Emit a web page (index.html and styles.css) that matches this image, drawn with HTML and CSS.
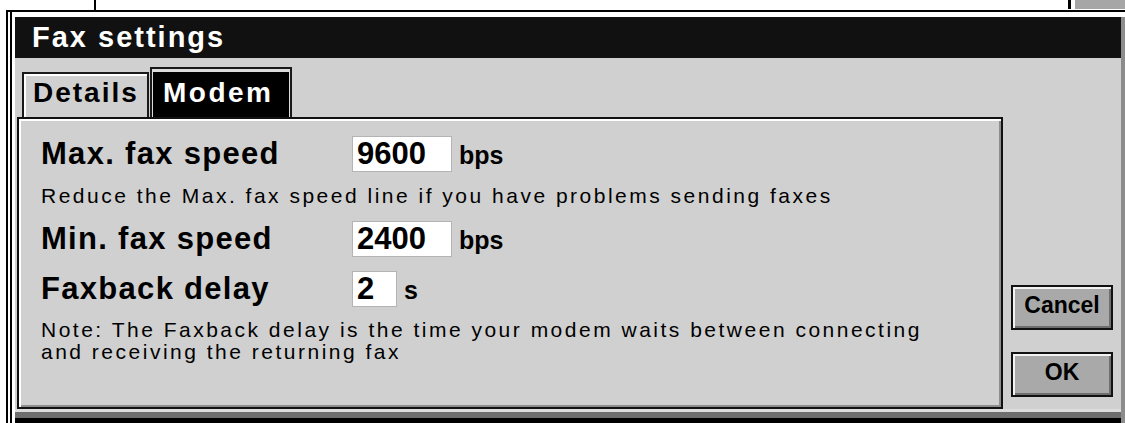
FILE: index.html
```html
<!DOCTYPE html>
<html lang="en">
<head>
<meta charset="utf-8">
<title>Fax settings</title>
<link rel="stylesheet" href="styles.css">
</head>
<body>
<div class="desktop">
  <div class="back back-left"></div>
  <div class="back back-right"><div class="back-fill"></div></div>

  <div class="window">
    <div class="frame">
      <div class="win">
        <div class="titlebar">Fax settings</div>
        <div class="body">
          <div class="main">
            <div class="tabs">
              <div class="tab">Details</div>
              <div class="tab tab-active"><span class="tab-face">Modem</span></div>
            </div>
            <div class="panel">
              <div class="field">
                <span class="label">Max. fax speed</span>
                <span class="input">9600</span>
                <span class="unit">bps</span>
              </div>
              <p class="hint">Reduce the Max. fax speed line if you have problems sending faxes</p>
              <div class="field">
                <span class="label">Min. fax speed</span>
                <span class="input">2400</span>
                <span class="unit">bps</span>
              </div>
              <div class="field field-gap">
                <span class="label">Faxback delay</span>
                <span class="input input-short">2</span>
                <span class="unit">s</span>
              </div>
              <p class="hint note">Note: The Faxback delay is the time your modem waits between connecting and receiving the returning fax</p>
            </div>
          </div>
          <div class="actions">
            <button class="btn" type="button">Cancel</button>
            <button class="btn" type="button">OK</button>
          </div>
        </div>
        <div class="win-foot"></div>
      </div>
    </div>
  </div>
</div>
</body>
</html>
```

FILE: styles.css
```css
* {
  box-sizing: border-box;
}

html,
body {
  margin: 0;
  background: #fff;
}

.desktop {
  position: relative;
  width: 1125px;
  height: 423px;
  padding-top: 10px;
  overflow: hidden;
  font-family: "Liberation Sans", Arial, sans-serif;
  color: #000;
}

/* edges of the windows lying behind the dialog */
.back {
  position: absolute;
  top: 0;
}

.back-left {
  left: 94px;
  width: 2px;
  height: 10px;
  background: #000;
}

.back-right {
  left: 1068px;
  width: 57px;
  height: 9px;
  border-left: 3px solid #000;
  padding-left: 4px;
}

.back-fill {
  height: 100%;
  background: #a6a6a6;
}

/* dialog window frame */
.window {
  height: 413px;
  margin-left: 6px;
  border-top: 2px solid #000;
  border-left: 2px solid #000;
  padding-left: 2px;
  background: #fff;
}

.frame {
  height: 100%;
  border-left: 2px solid #000;
  padding: 5px 0 0 3px;
}

.win {
  height: 100%;
  display: flex;
  flex-direction: column;
  border-right: 4px solid #8c8c8c;
}

.titlebar {
  height: 41px;
  flex: none;
  padding-left: 17px;
  background: #111;
  color: #fff;
  font-size: 29px;
  font-weight: bold;
  line-height: 41px;
  letter-spacing: 2px;
}

.body {
  flex: 1;
  display: flex;
  padding-left: 2px;
  background: #d0d0d0;
}

.main {
  width: 986px;
  flex: none;
  display: flex;
  flex-direction: column;
}

/* tab strip */
.tabs {
  height: 59px;
  flex: none;
  display: flex;
  align-items: flex-end;
  gap: 1px;
  padding-left: 5px;
}

.tab {
  width: 127px;
  height: 45px;
  border: 2px solid #1a1a1a;
  border-bottom: 0;
  padding: 3px 0 0 9px;
  box-shadow: inset 2px 2px 0 #fff;
  font-size: 28px;
  font-weight: bold;
  line-height: 32px;
  letter-spacing: 2px;
}

.tab-active {
  width: 142px;
  height: 50px;
  padding: 3px 1px 0 1px;
  background: #dcdcdc;
  box-shadow: none;
}

.tab-face {
  display: block;
  height: 100%;
  padding: 5px 0 0 10px;
  background: #000;
  color: #fff;
  letter-spacing: 2.5px;
}

/* raised content panel */
.panel {
  flex: 1;
  border: 2px solid #111;
  padding: 17px 0 0 22px;
  box-shadow: inset 2px 2px 0 #fff, inset -2px -2px 0 #8e8e8e;
}

.field {
  display: flex;
  align-items: baseline;
  height: 36px;
}

.field-gap {
  margin-top: 14px;
}

.label {
  flex: 0 0 311px;
  font-size: 31px;
  font-weight: bold;
  line-height: 36px;
  letter-spacing: 1.3px;
}

.input {
  width: 100px;
  height: 36px;
  border: 1px solid #b4b4b4;
  padding-left: 4px;
  background: #fff;
  font-size: 31px;
  font-weight: bold;
  line-height: 34px;
}

.input-short {
  width: 45px;
}

.unit {
  margin-left: 7px;
  font-size: 25px;
  font-weight: bold;
}

.hint {
  margin: 12px 0 13px;
  font-size: 21px;
  line-height: 24px;
  letter-spacing: 2.5px;
}

.note {
  max-width: 905px;
  margin: 12px 0 0;
  line-height: 22px;
}

/* action buttons */
.actions {
  flex: 1;
  display: flex;
  flex-direction: column;
  justify-content: flex-end;
  align-items: flex-start;
  gap: 22px;
  padding: 0 0 12px 8px;
}

.btn {
  width: 102px;
  height: 45px;
  border: 2px solid #111;
  padding: 0 0 4px;
  background: #a9a9a9;
  box-shadow: inset 2px 2px 0 #f2f2f2, inset -2px -2px 0 #6e6e6e;
  font-family: "Liberation Sans", Arial, sans-serif;
  font-size: 23px;
  font-weight: bold;
  color: #000;
}

.win-foot {
  height: 14px;
  flex: none;
  border-top: 3px solid #dcdcdc;
  border-bottom: 5px solid #000;
  background: #6e6e6e;
}
```
